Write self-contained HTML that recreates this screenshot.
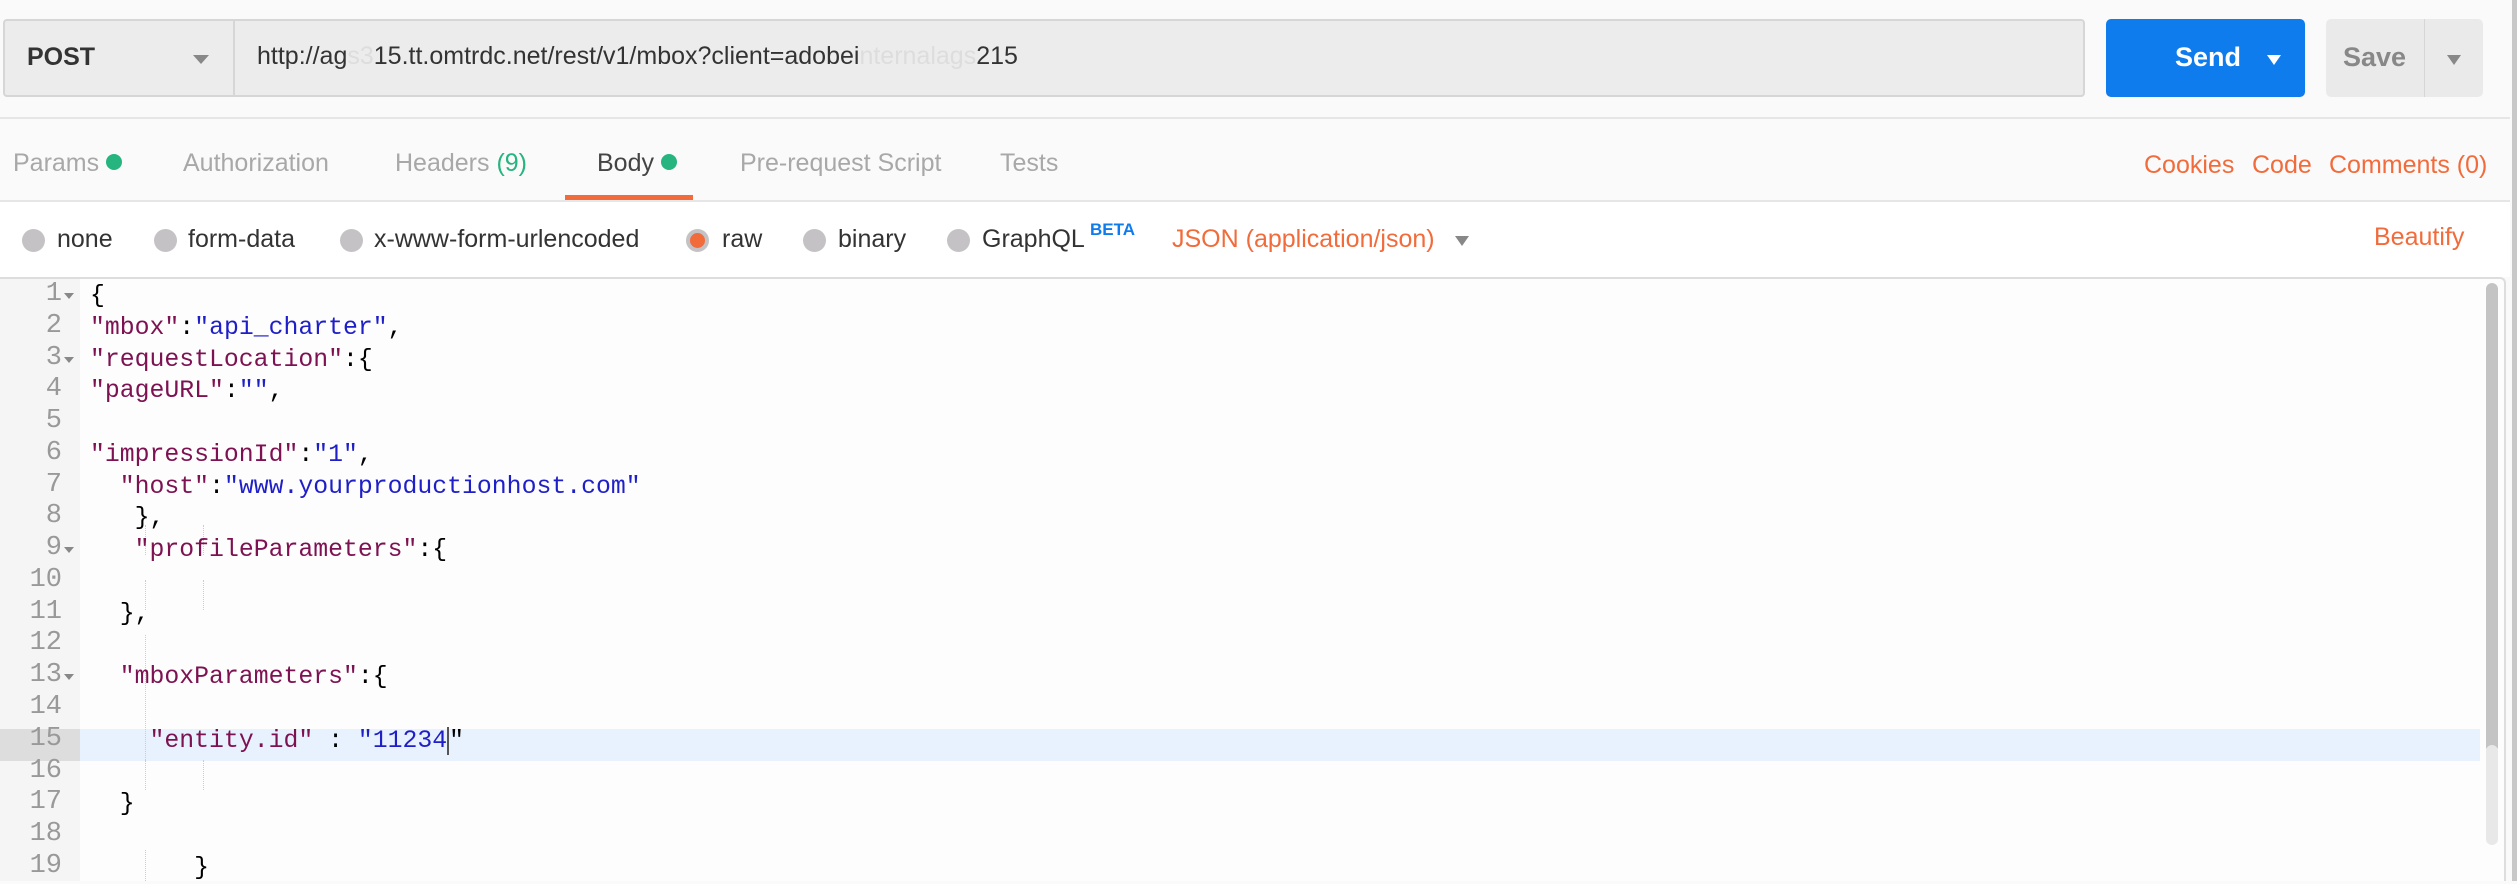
<!DOCTYPE html>
<html><head><meta charset="utf-8"><style>
*{margin:0;padding:0;box-sizing:border-box}
body{width:2517px;height:881px;background:#fafafa;font-family:"Liberation Sans",sans-serif;position:relative;overflow:hidden}
.a{position:absolute;white-space:nowrap}
.urlbar{left:3px;top:19px;width:2082px;height:78px;background:#ececec;border:2px solid #d6d6d6;border-radius:4px}
.tab{top:149px;font-size:25px;color:#a8a8a8}
.rad{width:23px;height:23px;border-radius:50%;background:#c4c2c4;top:229px}
.rt{top:225px;font-size:25px;color:#333}
.a.or{color:#f26b3a}
.code{font-family:"Liberation Mono",monospace;font-size:24.8px;color:#000}
.ln{position:absolute;left:0;width:62px;text-align:right;font-family:"Liberation Mono",monospace;font-size:27px;color:#999}
.k{color:#7d1252}.s{color:#1f1fc7}
.fold{position:absolute;left:64px;width:0;height:0;border-left:5px solid transparent;border-right:5px solid transparent;border-top:6px solid #888}
.g{position:absolute;width:0;border-left:1px dotted #ccc}
</style></head><body>
<div class="a urlbar"></div>
<div class="a" style="left:233px;top:21px;width:2px;height:74px;background:#d6d6d6"></div>
<div class="a" style="left:27px;top:43px;font-size:25px;font-weight:bold;color:#333">POST</div>
<div class="a" style="left:193px;top:55px;border-left:8px solid transparent;border-right:8px solid transparent;border-top:9px solid #888;width:0"></div>
<div class="a" style="left:257px;top:42px;font-size:25px;color:#333">http://ag<span style="color:#ddd">s3</span>15.tt.omtrdc.net/rest/v1/mbox?client=adobei<span style="color:#ddd">nternalags</span>215</div>
<div class="a" style="left:2106px;top:19px;width:199px;height:78px;background:#0e7ced;border-radius:5px"></div>
<div class="a" style="left:2175px;top:42px;font-size:27px;font-weight:bold;color:#fff">Send</div>
<div class="a" style="left:2267px;top:55px;border-left:7px solid transparent;border-right:7px solid transparent;border-top:10px solid #fff;width:0"></div>
<div class="a" style="left:2326px;top:19px;width:157px;height:78px;background:#eaeaea;border-radius:5px"></div>
<div class="a" style="left:2424px;top:19px;width:1px;height:78px;background:#d6d6d6"></div>
<div class="a" style="left:2343px;top:42px;font-size:27px;font-weight:bold;color:#888">Save</div>
<div class="a" style="left:2447px;top:55px;border-left:7px solid transparent;border-right:7px solid transparent;border-top:10px solid #888;width:0"></div>
<div class="a" style="left:0;top:117px;width:2510px;height:2px;background:#e6e6e6"></div>
<div class="a tab" style="left:13px">Params <span style="display:inline-block;width:16px;height:16px;border-radius:50%;background:#26b47f;vertical-align:1px"></span></div>
<div class="a tab" style="left:183px">Authorization</div>
<div class="a tab" style="left:395px">Headers <span style="color:#26b47f">(9)</span></div>
<div class="a tab" style="left:597px;color:#444">Body <span style="display:inline-block;width:16px;height:16px;border-radius:50%;background:#26b47f;vertical-align:1px"></span></div>
<div class="a tab" style="left:740px">Pre-request Script</div>
<div class="a tab" style="left:1000px">Tests</div>
<div class="a tab or" style="left:2144px;top:151px">Cookies</div>
<div class="a tab or" style="left:2252px;top:151px">Code</div>
<div class="a tab or" style="left:2329px;top:151px">Comments (0)</div>
<div class="a" style="left:565px;top:195px;width:128px;height:6px;background:#f26b3a"></div>
<div class="a" style="left:0;top:200px;width:2510px;height:2px;background:#e6e6e6"></div>
<div class="a" style="left:0;top:202px;width:2510px;height:75px;background:#fff"></div>
<div class="a rad" style="left:22px"></div><div class="a rt" style="left:57px">none</div>
<div class="a rad" style="left:154px"></div><div class="a rt" style="left:188px">form-data</div>
<div class="a rad" style="left:340px"></div><div class="a rt" style="left:374px">x-www-form-urlencoded</div>
<div class="a rad" style="left:686px;background:#c4c2c4;border:4px solid #c4c2c4"><div style="width:15px;height:15px;border-radius:50%;background:#f26b3a"></div></div><div class="a rt" style="left:722px">raw</div>
<div class="a rad" style="left:803px"></div><div class="a rt" style="left:838px">binary</div>
<div class="a rad" style="left:947px"></div><div class="a rt" style="left:982px">GraphQL</div>
<div class="a" style="left:1090px;top:220px;font-size:17px;font-weight:bold;color:#0e7ced">BETA</div>
<div class="a rt or" style="left:1172px">JSON (application/json)</div>
<div class="a" style="left:1455px;top:236px;border-left:7px solid transparent;border-right:7px solid transparent;border-top:10px solid #888;width:0"></div>
<div class="a rt or" style="left:2374px;top:223px">Beautify</div>
<div class="a" style="left:0;top:277px;width:2506px;height:604px;background:#fdfdfd;border-top:2px solid #ddd;border-right:2px solid #ddd;border-radius:0 6px 0 0"></div>
<div class="a" style="left:0;top:279px;width:80px;height:602px;background:#f5f5f5"></div>
<div class="a" style="left:0;top:729px;width:80px;height:32px;background:#ddd"></div>
<div class="a" style="left:80px;top:729px;width:2400px;height:32px;background:#e8f2fe"></div>
<div class="a" style="left:2486px;top:283px;width:12px;height:470px;background:#c4c4c4;border-radius:6px"></div>
<div class="a" style="left:2486px;top:745px;width:12px;height:100px;background:#e8e8e8;border-radius:6px"></div>
<div class="a" style="left:2512px;top:0;width:5px;height:881px;background:#c8c8c8"></div>
<div class="g" style="left:145px;top:525px;height:30px"></div><div class="g" style="left:203px;top:525px;height:30px"></div>
<div class="g" style="left:145px;top:580px;height:30px"></div><div class="g" style="left:203px;top:580px;height:30px"></div>
<div class="g" style="left:145px;top:635px;height:125px"></div>
<div class="g" style="left:145px;top:760px;height:30px"></div><div class="g" style="left:203px;top:760px;height:30px"></div>
<div class="g" style="left:145px;top:850px;height:31px"></div>
<div class="a" style="left:0;top:279px;width:2480px;height:602px">
<div class="ln" style="top:0px">1</div><div class="fold" style="top:14px"></div>
<div class="ln" style="top:32px">2</div>
<div class="ln" style="top:64px">3</div><div class="fold" style="top:78px"></div>
<div class="ln" style="top:95px">4</div>
<div class="ln" style="top:127px">5</div>
<div class="ln" style="top:159px">6</div>
<div class="ln" style="top:191px">7</div>
<div class="ln" style="top:222px">8</div>
<div class="ln" style="top:254px">9</div><div class="fold" style="top:268px"></div>
<div class="ln" style="top:286px">10</div>
<div class="ln" style="top:318px">11</div>
<div class="ln" style="top:349px">12</div>
<div class="ln" style="top:381px">13</div><div class="fold" style="top:395px"></div>
<div class="ln" style="top:413px">14</div>
<div class="ln" style="top:445px">15</div>
<div class="ln" style="top:477px">16</div>
<div class="ln" style="top:508px">17</div>
<div class="ln" style="top:540px">18</div>
<div class="ln" style="top:572px">19</div>
<pre class="code" style="position:absolute;left:90px;top:2px;line-height:31.75px">{
<span class="k">"mbox"</span>:<span class="s">"api_charter"</span>,
<span class="k">"requestLocation"</span>:{
<span class="k">"pageURL"</span>:<span class="s">""</span>,

<span class="k">"impressionId"</span>:<span class="s">"1"</span>,
  <span class="k">"host"</span>:<span class="s">"www.yourproductionhost.com"</span>
   },
   <span class="k">"profileParameters"</span>:{

  },

  <span class="k">"mboxParameters"</span>:{

    <span class="k">"entity.id"</span> : <span class="s">"11234</span><span style="border-left:2px solid #555">"</span>

  }

       }</pre>
</div>
</body></html>
